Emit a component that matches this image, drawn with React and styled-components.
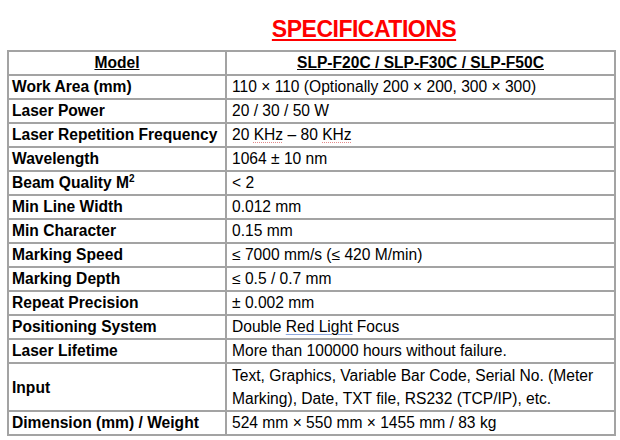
import React from 'react';
import styled, { createGlobalStyle } from 'styled-components';

const GlobalStyle = createGlobalStyle`
  body {
    margin: 0;
    background: #fff;
    font-family: "Liberation Sans", Arial, sans-serif;
    color: #000;
  }
`;

const Page = styled.div`
  width: 620px;
  height: 440px;
  overflow: hidden;
  padding-top: 16px;
  box-sizing: border-box;
`;

const Title = styled.h1`
  margin: 0 0 8px;
  padding-left: 108px;
  text-align: center;
  font-size: 23px;
  line-height: 26px;
  letter-spacing: -0.5px;
  font-weight: bold;
  color: #ff0000;
  text-decoration: underline;
  text-decoration-thickness: 2px;
  text-underline-offset: 2px;
`;

const Table = styled.table`
  margin-left: 7px;
  width: 609px;
  border-collapse: collapse;
  border: 2px solid #8a8a8a;
  font-size: 15.6px;
  table-layout: fixed;
`;

const Cell = styled.td`
  border: 2px solid #a3a3a3;
  height: ${(p) => (p.$tall ? 45 : 22)}px;
  padding: 0 5px;
  line-height: ${(p) => (p.$tall ? '23px' : '20px')};
  vertical-align: middle;
  white-space: ${(p) => (p.$tall ? 'normal' : 'nowrap')};
`;

const Label = styled(Cell)`
  padding-left: 3px;
  font-weight: bold;
`;

const Head = styled(Cell)`
  font-weight: bold;
  text-align: center;
  text-decoration: underline;
`;

const Spell = styled.span`
  text-decoration: underline dotted #e58a8a;
  text-decoration-thickness: 1px;
  text-underline-offset: 2px;
`;

const Grammar = styled.span`
  text-decoration: underline #8fa9df;
  text-decoration-thickness: 1px;
  text-underline-offset: 2px;
`;

const Sup = styled.sup`
  font-size: 10px;
  vertical-align: 6px;
  line-height: 0;
`;

const rows = [
  ['Work Area (mm)', '110 × 110 (Optionally 200 × 200, 300 × 300)'],
  ['Laser Power', '20 / 30 / 50 W'],
  ['Laser Repetition Frequency', <>20 <Spell>KHz</Spell> – 80 <Spell>KHz</Spell></>],
  ['Wavelength', '1064 ± 10 nm'],
  [<>Beam Quality M<Sup>2</Sup></>, '< 2'],
  ['Min Line Width', '0.012 mm'],
  ['Min Character', '0.15 mm'],
  ['Marking Speed', '≤ 7000 mm/s (≤ 420 M/min)'],
  ['Marking Depth', '≤ 0.5 / 0.7 mm'],
  ['Repeat Precision', '± 0.002 mm'],
  ['Positioning System', <>Double <Grammar>Red Light</Grammar> Focus</>],
  ['Laser Lifetime', 'More than 100000 hours without failure.'],
  ['Input', 'Text, Graphics, Variable Bar Code, Serial No. (Meter Marking), Date, TXT file, RS232 (TCP/IP), etc.', true],
  ['Dimension (mm) / Weight', '524 mm × 550 mm × 1455 mm / 83 kg'],
];

export default function App() {
  return (
    <Page>
      <GlobalStyle />
      <Title>SPECIFICATIONS</Title>
      <Table>
        <colgroup>
          <col style={{ width: 218 }} />
          <col />
        </colgroup>
        <tbody>
          <tr>
            <Head as="th">Model</Head>
            <Head as="th">SLP-F20C / SLP-F30C / SLP-F50C</Head>
          </tr>
          {rows.map(([label, value, tall], i) => (
            <tr key={i}>
              <Label $tall={tall}>{label}</Label>
              <Cell $tall={tall}>{value}</Cell>
            </tr>
          ))}
        </tbody>
      </Table>
    </Page>
  );
}
